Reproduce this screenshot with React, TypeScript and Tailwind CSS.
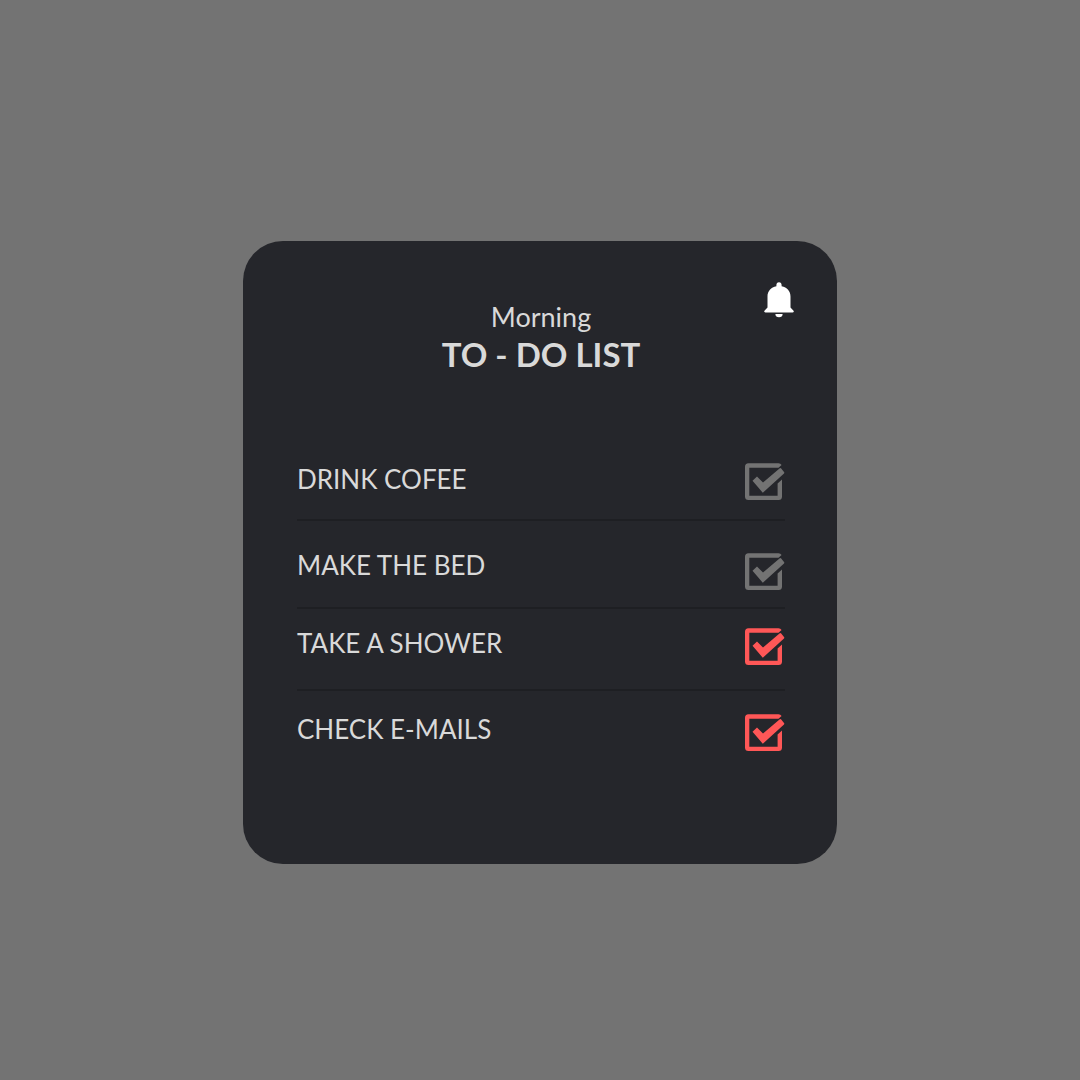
import { useState } from "react";

type Task = { id: string; label: string; done: boolean; row: string; box: string };

const initialTasks: Task[] = [
  { id: "coffee", label: "DRINK COFEE", done: false, row: "border-b-2 pb-[18px]", box: "" },
  { id: "bed", label: "MAKE THE BED", done: false, row: "border-b-2 pt-7 pb-4", box: "mt-1" },
  { id: "shower", label: "TAKE A SHOWER", done: true, row: "border-b-2 pt-[18px] pb-[23px]", box: "mt-px" },
  { id: "emails", label: "CHECK E-MAILS", done: true, row: "pt-[22px]", box: "mt-px" },
];

function BellIcon() {
  return (
    <svg viewBox="0 0 30 36" className="h-9 w-[30px]" fill="currentColor" aria-hidden="true">
      <path d="M15 0.2C13.300 0.2 12.400 1.400 12.400 2.900V4.200C7 5.300 3.500 9 3.500 14.500V25.500L0.700 28.400C-0.300 29.600 0.300 30.400 1.400 30.400H28.600C29.700 30.400 30.300 29.600 29.300 28.400L26.500 25.500V14.500C26.500 9 23 5.300 17.600 4.200V2.900C17.600 1.400 16.700 0.200 15 0.200Z" />
      <path d="M11.400 32H18.600C18.600 34.100 17.200 35.300 15 35.300S11.400 34.100 11.400 32Z" />
    </svg>
  );
}

function CheckIcon() {
  return (
    <svg viewBox="0 0 40 38" className="pointer-events-none absolute inset-0 size-full" fill="currentColor" aria-hidden="true">
      <path d="M3.500 0.300H33.500Q35.500 0.300 36.600 2L33.500 4.700H4.300V32.700H32.600V20.500L37 16.500V33.500Q37 37 33.500 37H3.500Q0 37 0 33.500V3.800Q0 0.300 3.500 0.300Z" />
      <path d="M7.500 17.800L12 13.500L18 19.500L34.800 5.200Q35.600 4.800 36.200 5.500L39.200 9.300Q39.500 10 39 10.500L17.800 29.800Z" />
    </svg>
  );
}

export default function App() {
  const [tasks, setTasks] = useState(initialTasks);
  const toggle = (id: string) =>
    setTasks((list) => list.map((t) => (t.id === id ? { ...t, done: !t.done } : t)));

  return (
    <main className="flex min-h-screen items-start justify-center bg-[#737373] px-4 pt-[241px] pb-16 font-['Lato',sans-serif] text-[#d9d9d9]">
      <section className="relative w-full max-w-[594px] rounded-[40px] bg-[#25262b] pt-[60px] pr-[52px] pb-28 pl-[54px]">
        <button type="button" aria-label="Notifications" className="absolute top-[41px] right-[43px] text-white">
          <BellIcon />
        </button>
        <header className="text-center">
          <p className="text-[27px] leading-8">Morning</p>
          <h1 className="text-[33px] leading-[42px] font-bold">TO - DO LIST</h1>
        </header>
        <ul className="mt-[88px]">
          {tasks.map((task) => (
            <li key={task.id} className={`flex items-start justify-between border-[#1e1f23] ${task.row}`}>
              <label htmlFor={task.id} className="text-[26px] leading-8">
                {task.label}
              </label>
              <span className={`relative h-[38px] w-10 shrink-0 ${task.box} ${task.done ? "text-[#ff5757]" : "text-[#737373]"}`}>
                <input
                  id={task.id}
                  type="checkbox"
                  checked={task.done}
                  onChange={() => toggle(task.id)}
                  className="block size-full cursor-pointer appearance-none"
                />
                <CheckIcon />
              </span>
            </li>
          ))}
        </ul>
      </section>
    </main>
  );
}
